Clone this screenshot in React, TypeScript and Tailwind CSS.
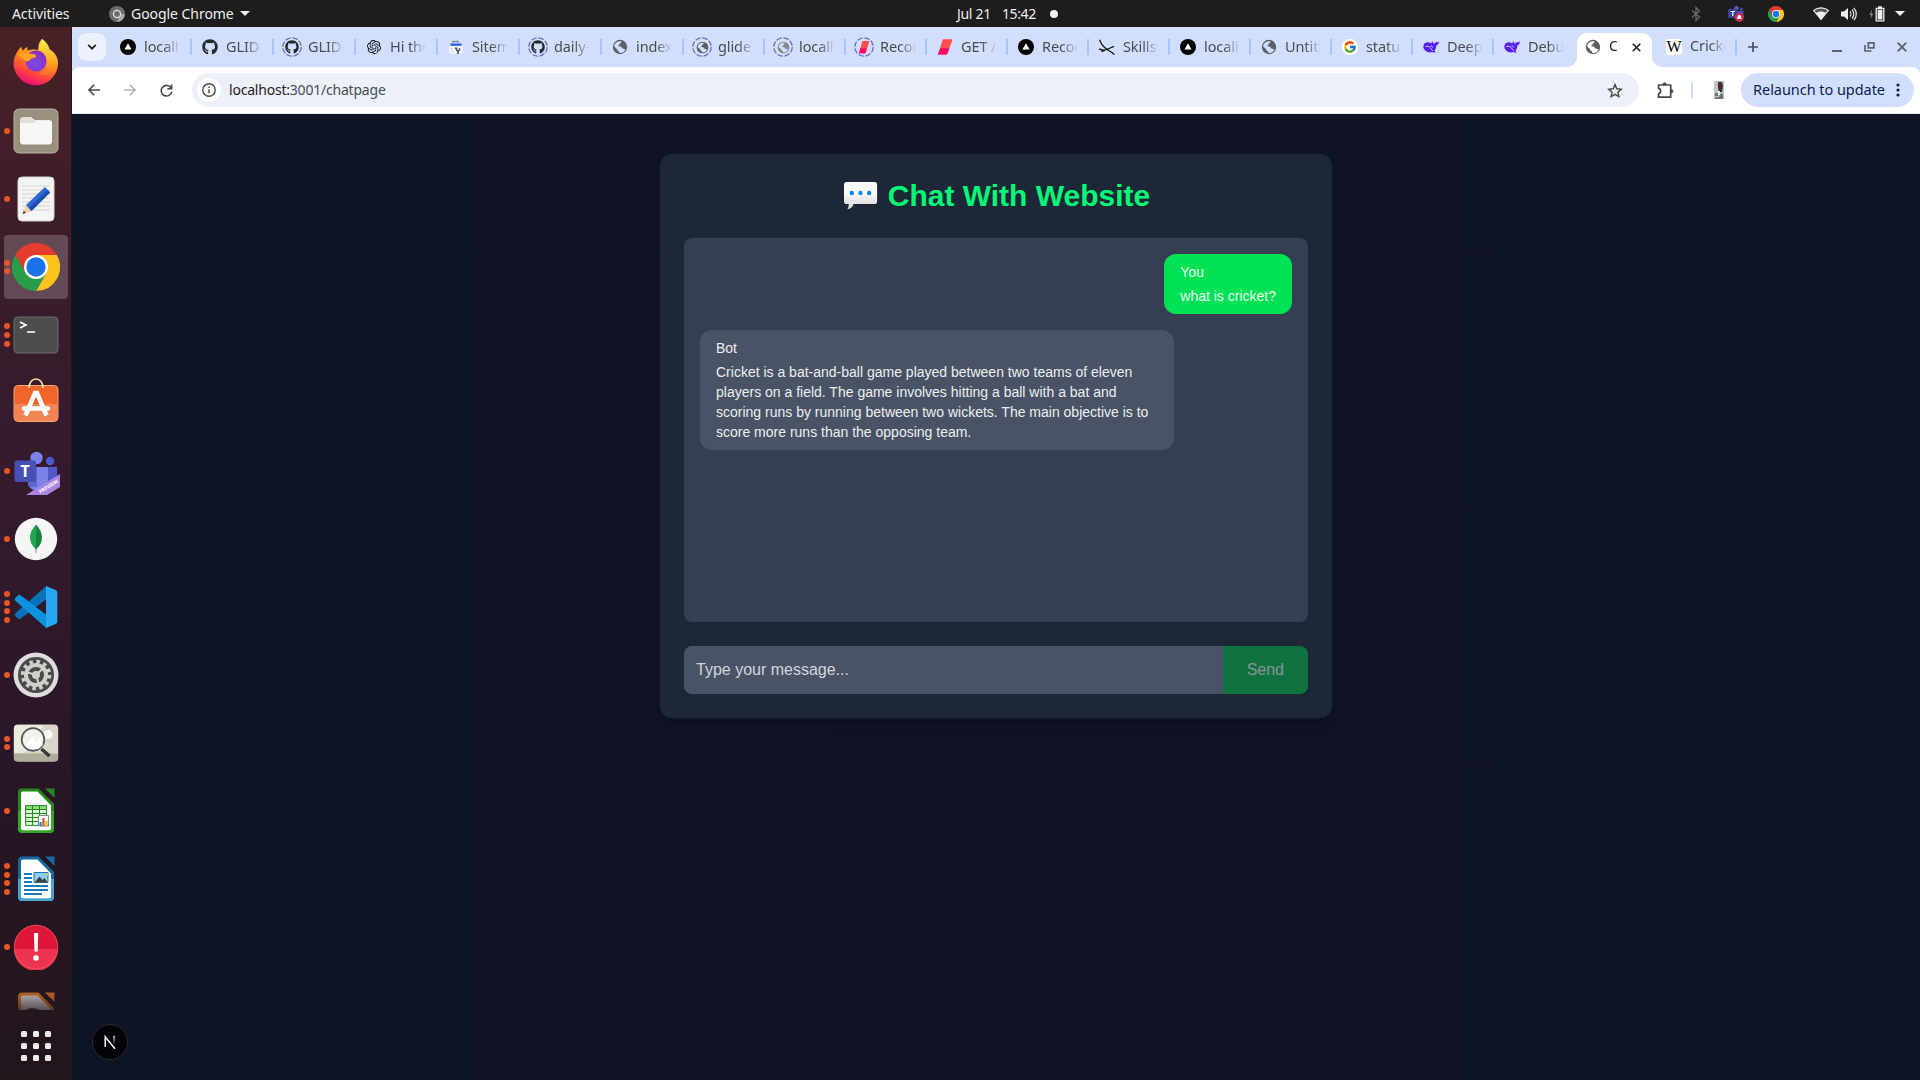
import React from "react";
import { FaGithub } from "react-icons/fa";
import { FcGoogle } from "react-icons/fc";
import { SiOpenai } from "react-icons/si";

/* ---------- favicons ---------- */

const Globe = ({ color = "#5b5f66", size = 16, land = "#d2dffc" }: { color?: string; size?: number; land?: string }) => (
  <svg width={size} height={size} viewBox="0 0 16 16">
    <circle cx="8" cy="8" r="7.2" fill={color} />
    <path
      d="M9.300 2.300c.3 1.200-.2 1.700-1 1.900-.9.200-.9.700-.8 1.400.1.700-.6 1-1.500 1 .1.900.8 1 1.900 1 1.300 0 1.800.6 1.900 1.600.9.100 1.500.1 1.900.7.500.7 1.300.4 2 .1A6 6 0 0 1 7.300 13.900c0-1.200-.2-1.700-1-1.900-.9-.2-1.200-.8-1.200-1.700L2 7.300A6 6 0 0 1 9.300 2.300z"
      fill={land}
    />
  </svg>
);

const Vercel = () => (
  <svg width="16" height="16" viewBox="0 0 16 16">
    <circle cx="8" cy="8" r="8" fill="#000" />
    <path d="M8 4.300l3.600 6.300H4.400z" fill="#fff" />
  </svg>
);

const Whale = () => (
  <svg width="16" height="16" viewBox="0 0 16 16">
    <path
      d="M.3 7.600C.3 4.700 2.600 3.200 5 3.200c1.400 0 2.500.8 3.400 1.600-.2-1 .2-1.900.9-2.600.6 1.700 1.400 2 2.200 2.600.3-1.100 1-1.500 1.900-1.500.9 0 1.500-.3 2.500-.9 0 1.800-.8 3.300-2.500 3.800-.1 2.600-.9 4.300-2 5.500l1.300 1.500c-1.200.6-2.500.4-3.400-.1-1.500.7-3.700.6-5.400-.3C1.800 11.800.3 9.900.3 7.600z"
      fill="#5a1cf5"
    />
    <path d="M2.400 7.600c1.900-1.200 4 .1 5.300 1.600 1 1.100 1.300 2.200 2.200 2.700M7.600 7c1-.2 1.800.4 2 1.500" stroke="#d2dffc" strokeWidth="1" fill="none" />
  </svg>
);

const Slab = ({ small }: { small?: boolean }) => (
  <svg width="16" height="16" viewBox="0 0 16 16">
    <g transform={small ? "translate(2.200 1.800) scale(.72 .8)" : undefined}>
      <path d="M6.700.2h7.500c.9 0 1.300.5 1 1.300l-3.200 8.700H2.800L5.400 1.200C5.600.500 6 .2 6.700.2z" fill="#ff4d4d" />
      <path d="M3.100 9.200h9.300l-1.800 5.400c-.3.800-.7 1.200-1.500 1.200H2c-.9 0-1.300-.5-1-1.300z" fill="#ff0a63" />
    </g>
  </svg>
);

const Plane = () => (
  <svg width="16" height="16" viewBox="0 0 16 16" fill="none" stroke="#111" strokeWidth="1.300">
    <path d="M.6.800c1.500 4.500 4.800 8.200 8 10 2.300 1.400 4.600 2.900 6.800 4.700" />
    <path d="M.3 9.900c2 1.300 4.600 1.600 7.200.6 2.800-1 5.200-2.200 7.600-3.100M2.600 12.600l3.400-1.400" />
  </svg>
);

const Sitemap = () => (
  <svg width="16" height="16" viewBox="0 0 16 16">
    <path d="M5 4V2.400h5V4" stroke="#7b8190" strokeWidth="1.200" fill="none" />
    <rect x="1" y="7" width="13.500" height="7.500" rx="1" fill="#f3f5fb" />
    <rect x="2.500" y="4.500" width="11" height="2.300" fill="#2f5fe8" />
    <path d="M7 9.200h1.500V11l1.500 1.500L11.500 11V9.200M10 12v3" stroke="#444a55" strokeWidth="1.500" fill="none" />
    <path d="M2 9.500h3M2 12h3" stroke="#d5d9e4" />
  </svg>
);

const Ring = ({ children }: { children: React.ReactNode }) => (
  <span className="relative flex h-4 w-4 items-center justify-center">
    <svg className="absolute -left-0.5 -top-0.5" width="20" height="20" viewBox="0 0 20 20">
      <circle cx="10" cy="10" r="9.200" fill="none" stroke="#6a6fb8" strokeWidth="1.300" strokeDasharray="5.600 1.625" />
    </svg>
    {children}
  </span>
);

const tabs: { label: string; icon: React.ReactNode }[] = [
  { label: "localhost", icon: <Vercel /> },
  { label: "GLID-1", icon: <FaGithub size={16} color="#24292f" /> },
  { label: "GLID-1", icon: <Ring><FaGithub size={14} color="#24292f" /></Ring> },
  { label: "Hi there", icon: <SiOpenai size={14} color="#15171b" /> },
  { label: "Sitemap", icon: <Sitemap /> },
  { label: "daily-n", icon: <Ring><FaGithub size={14} color="#24292f" /></Ring> },
  { label: "index.h", icon: <Globe /> },
  { label: "glide.c", icon: <Ring><Globe size={13} /></Ring> },
  { label: "localhost", icon: <Ring><Globe size={13} color="#85868b" /></Ring> },
  { label: "Recon", icon: <Ring><Slab small /></Ring> },
  { label: "GET /a", icon: <Slab /> },
  { label: "Recon", icon: <Vercel /> },
  { label: "Skillsy", icon: <Plane /> },
  { label: "localhost", icon: <Vercel /> },
  { label: "Untitled", icon: <Globe /> },
  {
    label: "status",
    icon: (
      <span className="flex h-4 w-4 items-center justify-center rounded-full bg-white">
        <FcGoogle size={14} />
      </span>
    ),
  },
  { label: "DeepS", icon: <Whale /> },
  { label: "Debug", icon: <Whale /> },
];

const fade = "[mask-image:linear-gradient(to_right,black_55%,transparent_100%)]";

function TabStrip() {
  return (
    <div className="flex h-10 shrink-0 items-center bg-[#d2dffc] pl-1.5">
      <button className="flex h-7 w-7 items-center justify-center rounded-[9px] bg-[#ecf1fd]">
        <svg width="10" height="6" viewBox="0 0 10 6" fill="none" stroke="#1f2023" strokeWidth="1.900">
          <path d="M1.200.9L5 4.600 8.800.9" />
        </svg>
      </button>
      <div className="ml-1 flex">
        {tabs.map((t, i) => (
          <div key={i} className={`flex h-6 shrink-0 items-center ${i < 7 ? "w-[82px]" : "w-[81px]"}`}>
            <span className="ml-2.5 flex h-4 w-4 shrink-0 items-center justify-center">{t.icon}</span>
            <span className={`-mt-0.5 ml-2 w-9 overflow-hidden whitespace-nowrap text-[14.500px] leading-6 tracking-[-0.100px] text-[#484c55] ${fade}`}>{t.label}</span>
            {i < tabs.length - 1 && <span className="ml-auto h-4 w-0.5 bg-[#a9c3fb]" />}
          </div>
        ))}
      </div>
      <div className="relative ml-0.5 mt-1.5 flex h-[34px] w-[75px] shrink-0 items-center rounded-t-[10px] bg-white">
        <svg className="absolute -left-2.5 bottom-0" width="10" height="10">
          <path d="M10 0v10H0A10 10 0 0 0 10 0z" fill="#fff" />
        </svg>
        <svg className="absolute -right-2.5 bottom-0" width="10" height="10">
          <path d="M0 0v10h10A10 10 0 0 1 0 0z" fill="#fff" />
        </svg>
        <span className="-mt-1.5 ml-2 flex items-center">
          <Globe land="#ffffff" />
          <span className="-mt-0.5 ml-2 w-[11px] overflow-hidden text-[14.500px] text-[#1f2023] [mask-image:linear-gradient(to_right,black_60%,transparent)]">Ch</span>
          <svg className="ml-3" width="9" height="9" viewBox="0 0 9 9" stroke="#1f2023" strokeWidth="1.600">
            <path d="M.7.700l7.600 7.600M8.300.700L.700 8.300" />
          </svg>
        </span>
      </div>
      <span className="ml-3.5 flex h-4 w-4 items-center justify-center rounded-[3px] bg-white font-['Liberation_Serif',serif] text-[16px] leading-4 text-black">W</span>
      <span className={`-mt-0.5 ml-2 w-9 overflow-hidden whitespace-nowrap text-[14.500px] tracking-[-0.100px] text-[#484c55] ${fade}`}>Cricket</span>
      <span className="ml-[9px] h-4 w-0.5 bg-[#a9c3fb]" />
      <svg className="ml-[11px]" width="10" height="10" stroke="#4b4f57" strokeWidth="1.700">
        <path d="M5 0v10M0 5h10" />
      </svg>
      <div className="ml-auto flex items-center gap-[22px] pr-[13px]">
        <svg width="10" height="10" stroke="#5d6270" strokeWidth="2">
          <path d="M0 9h10" />
        </svg>
        <svg width="11" height="10" viewBox="0 0 11 10" fill="none" stroke="#5d6270" strokeWidth="1.700">
          <path d="M4.300.9h5.600v5H4.300zM1 3v6h6.500" />
        </svg>
        <svg width="10" height="10" stroke="#5d6270" strokeWidth="1.900">
          <path d="M.7.700l8.600 8.600M9.300.700L.700 9.300" />
        </svg>
      </div>
    </div>
  );
}

function Toolbar() {
  return (
    <div className="h-[47px] shrink-0 bg-[#d2dffc]">
      <div className="flex h-[47px] items-center rounded-t-lg border-b border-[#dfe3ec] bg-white pl-4">
        <svg width="12" height="12" viewBox="0 0 12 12" fill="none" stroke="#474747" strokeWidth="1.600">
          <path d="M12 6H1.200M6.200.8L1 6l5.200 5.200" />
        </svg>
        <svg className="ml-6" width="12" height="12" viewBox="0 0 12 12" fill="none" stroke="#b4b4b6" strokeWidth="1.600">
          <path d="M0 6h10.800M5.800.8L11 6l-5.200 5.200" />
        </svg>
        <svg className="ml-6" width="13" height="13" viewBox="0 0 13 13" fill="none" stroke="#474747" strokeWidth="1.600">
          <path d="M11 3.800A5.300 5.300 0 1 0 11.800 7.600M11.600.6v4.200H7.400" />
        </svg>
        <div className="ml-[19px] flex h-[34px] w-[1447px] items-center rounded-full bg-[#ecf0f9] pl-[5px]">
          <span className="flex h-6 w-6 items-center justify-center rounded-full bg-white">
            <svg width="14" height="14" viewBox="0 0 14 14" fill="none" stroke="#474747" strokeWidth="1.400">
              <circle cx="7" cy="7" r="6.200" />
              <path d="M7 6.200v4M7 3.600v1.500" />
            </svg>
          </span>
          <span className="-mt-px ml-2 text-[14px] tracking-[-0.210px] text-[#1f2023]">
            localhost:<span className="text-[#4a4d54]">3001/chatpage</span>
          </span>
          <svg className="ml-auto mr-4" width="16" height="15" viewBox="0 0 16 15" fill="none" stroke="#474747" strokeWidth="1.400">
            <path d="M8 1.600l1.800 4.200 4.500.4-3.400 3 1 4.400L8 11.300l-3.900 2.300 1-4.400-3.400-3 4.500-.4z" />
          </svg>
        </div>
        <svg className="ml-[18px]" width="17" height="17" viewBox="0 0 17 17" fill="none" stroke="#474747" strokeWidth="1.700">
          <path d="M1.500 3h12.200v12.200H1.500v-3.400c2.800-.4 2.800-5 0-5.400z" strokeLinejoin="round" />
          <path d="M5.800 2.500a1.700 1.700 0 0 1 3.400 0zM14.200 7.500a1.600 1.600 0 0 1 0 3.400z" fill="#474747" strokeWidth="1" />
        </svg>
        <span className="ml-[17px] h-4 w-0.5 bg-[#cfdcfb]" />
        <svg className="ml-[21px]" width="10" height="18" viewBox="0 0 10 18">
          <path d="M0 0h10v18H0z" fill="#b9c4c6" />
          <path d="M4 1h4l1 4-1 6H5L4 7z" fill="#4b2a33" />
          <path d="M1 12h3v3H1zM6 13h3v3H5zM1 16h8v2H1z" fill="#6f7577" />
          <path d="M4 10h2v4H4z" fill="#eef3f3" />
        </svg>
        <button className="ml-[17px] flex h-[34px] w-[173px] items-center rounded-full bg-[#d2dffc] pl-3 text-[14.500px] text-[#0b1d55]">
          <span className="-mt-px w-[132px] whitespace-nowrap tracking-[-0.050px]">Relaunch to update</span>
          <svg className="ml-[11px]" width="4" height="14" fill="#0b1d55">
            <circle cx="2" cy="2" r="1.600" />
            <circle cx="2" cy="7" r="1.600" />
            <circle cx="2" cy="12" r="1.600" />
          </svg>
        </button>
      </div>
    </div>
  );
}

/* ---------- dock icons ---------- */

const ChromeIcon = ({ size }: { size: number }) => (
  <svg width={size} height={size} viewBox="0 0 48 48">
    <path d="M3.200 12A24 24 0 0 1 44.800 12H24L13.600 30z" fill="#e33b2e" />
    <path d="M44.800 12A24 24 0 0 1 24 48L34.400 30 24 12z" fill="#fcc31e" />
    <path d="M24 48A24 24 0 0 1 3.200 12L13.600 30 34.400 30z" fill="#2a9d49" />
    <circle cx="24" cy="24" r="12" fill="#fff" />
    <circle cx="24" cy="24" r="9.700" fill="#1a73e8" />
  </svg>
);

const Firefox = () => (
  <svg width="48" height="48" viewBox="0 0 48 48">
    <defs>
      <linearGradient id="ffBody" x1="0.700" y1="0" x2="0.300" y2="1">
        <stop offset="0" stopColor="#ffdf3a" />
        <stop offset="0.450" stopColor="#ff8a1e" />
        <stop offset="0.750" stopColor="#ff4040" />
        <stop offset="1" stopColor="#e6067f" />
      </linearGradient>
      <linearGradient id="ffFlame" x1="0.500" y1="0" x2="0.500" y2="1">
        <stop offset="0" stopColor="#fff44f" />
        <stop offset="0.700" stopColor="#ffa01f" />
        <stop offset="1" stopColor="#ff6a2a" />
      </linearGradient>
      <radialGradient id="ffOrb" cx="0.450" cy="0.650" r="0.600">
        <stop offset="0" stopColor="#7a4de8" />
        <stop offset="1" stopColor="#8b2bc0" />
      </radialGradient>
    </defs>
    <path d="M4 16c1.500-3.500 4-6 5.500-7.500 0 2 .5 3 1.500 4 1-1.300 3-3 4.500-3.400-.5 1.500 0 3 .5 3.500 4-1.500 8-1 10-.5L30 1c3 2.500 6.500 7 7 11 3.500 1.500 9 6 9 15A22.300 22.300 0 0 1 1.600 27C1.400 22.500 2.500 18.500 4 16z" fill="url(#ffBody)" />
    <path d="M30 1c-3 3-4.500 7-3 11 5 1 8 6 8 12 0 7-5 12-11 12 11 4 22-2 22-11 0-8-5-11.500-8.500-14C37 7 33 3 30 1z" fill="url(#ffFlame)" opacity="0.850" />
    <circle cx="24" cy="23" r="10.500" fill="url(#ffOrb)" />
    <path d="M6 16c5-2 12-.5 16 0 1.500.5 2.500 2 2 3-2 1-6 1.500-7 4-1.500 1-4 0-6-2-2-1.500-4-3-5-5z" fill="#ffa21f" />
  </svg>
);

const Files = () => (
  <svg width="46" height="46" viewBox="0 0 46 46">
    <rect x="1" y="1" width="44" height="44" rx="5" fill="#9a907e" stroke="#b8b1a2" />
    <path d="M7 12c0-2 1-3 3-3h8l4 3h14c2 0 3 1 3 3v5H7z" fill="#e5e1da" />
    <path d="M7 15h14l2-2.500h13c2 0 3 1 3 3V33c0 2-1 3.500-3 3.500H10c-2 0-3-1.500-3-3.500z" fill="#f8f7f5" />
  </svg>
);

const Editor = () => (
  <svg width="48" height="48" viewBox="0 0 48 48">
    <rect x="6" y="2" width="36" height="44" rx="4" fill="#f4f4f3" stroke="#d4d4d4" />
    <path d="M10 11h28M10 15h28M10 19h28M10 23h28M10 27h28M10 31h28M10 35h28" stroke="#d3d3d3" />
    <path d="M10.500 39l3-8.500 6 5.500z" fill="#f1c9a2" />
    <path d="M10.500 39l1.200-3.200 2.200 2z" fill="#333" />
    <path d="M14 30l19-18 5 5.500L19.500 36z" fill="#2f66d8" />
    <path d="M17 33l18.800-18 2.200 2.500L19.500 36z" fill="#1e4cab" />
  </svg>
);

const Terminal = () => (
  <svg width="46" height="38" viewBox="0 0 46 38">
    <rect x="1" y="1" width="44" height="36" rx="4" fill="#4d4d4d" stroke="#6b6f6b" />
    <path d="M7 6l6 3-6 3" stroke="#fff" strokeWidth="1.600" fill="none" />
    <path d="M14 16h8" stroke="#fff" strokeWidth="1.600" />
  </svg>
);

const Software = () => (
  <svg width="46" height="44" viewBox="0 0 46 44">
    <rect x="1" y="7.500" width="44" height="36" rx="4" fill="#f06529" stroke="#f9a37a" />
    <path d="M1.500 26h43v13c0 2.500-1.500 4-4 4h-35c-2.500 0-4-1.500-4-4z" fill="#f28453" />
    <path d="M16 10c0-12 14-12 14 0" stroke="#f5dcae" strokeWidth="1.700" fill="none" />
    <path d="M12.500 37.500L22 15h2l9.500 22.500" stroke="#fff" strokeWidth="4.500" fill="none" />
    <path d="M11 30.500h24" stroke="#fff" strokeWidth="4.500" strokeLinecap="round" />
  </svg>
);

const Teams = () => (
  <svg width="48" height="46" viewBox="0 0 48 46" overflow="visible">
    <circle cx="24.500" cy="8" r="6.200" fill="#7b83eb" />
    <circle cx="38" cy="11" r="4.200" fill="#5059c9" />
    <path d="M35 17h10v12c0 5-3 8-8 8h-2z" fill="#5059c9" />
    <path d="M16 17h20v15c0 6-4 9-9.500 9S16 38 16 32z" fill="#7b83eb" />
    <path d="M25 17v20h-8a14 14 0 0 1-1-5V17z" fill="#6067cc" />
    <rect x="2.500" y="10.500" width="21.500" height="21.500" rx="2" fill="#4850b5" />
    <text x="13.200" y="26.500" textAnchor="middle" fontSize="16" fontWeight="700" fill="#fff" fontFamily="Noto Sans">T</text>
    <path d="M14 45L48 24v13L35 45z" fill="#ab86e0" />
    <text transform="translate(28.200 43.500) rotate(-31)" fontSize="5" fontWeight="700" fill="#fff" fontFamily="Noto Sans" textLength="21.500" lengthAdjust="spacingAndGlyphs">PREVIEW</text>
  </svg>
);

const Mongo = () => (
  <svg width="44" height="44" viewBox="0 0 44 44">
    <circle cx="22" cy="22" r="21.200" fill="#f5f5f5" />
    <path d="M22 36v-6" stroke="#9aa39a" strokeWidth="1.200" />
    <path d="M22 7.500c-8 8.500-8 18 0 25z" fill="#22a652" />
    <path d="M22 7.500c8 8.500 8 18 0 25z" fill="#16843f" />
  </svg>
);

const VSCode = () => (
  <svg width="44" height="44" viewBox="0 0 44 44">
    <path d="M32.500.8L1.300 28.300c-.8.800-.8 1.800 0 2.600l2.500 2.700c.8.700 1.800.8 2.700.1L32.500 14z" fill="#0a72b8" />
    <path d="M32.500 43.200L1.300 15.700c-.8-.8-.8-1.800 0-2.600l2.500-2.700c.8-.7 1.800-.8 2.700-.1L32.500 30z" fill="#0c93dd" />
    <path d="M32 1l9.500 4c1.200.6 1.800 1.500 1.800 2.800v28.400c0 1.300-.6 2.200-1.800 2.800l-9.500 4z" fill="#25a9f2" />
  </svg>
);

const Settings = () => (
  <svg width="46" height="46" viewBox="0 0 46 46">
    <circle cx="23" cy="23" r="22.500" fill="#dededd" />
    <circle cx="23" cy="23" r="18" fill="#4a4a49" />
    <circle cx="23" cy="23" r="13" fill="none" stroke="#cfcfcc" strokeWidth="4.500" strokeDasharray="3.400 3.407" />
    <circle cx="23" cy="23" r="10" fill="none" stroke="#cfcfcc" strokeWidth="4" />
    <circle cx="23" cy="23" r="4" fill="#cfcfcc" />
    <path d="M23 23l-10-3M23 23l7.500-7M23 23l3 10" stroke="#cfcfcc" strokeWidth="2.200" />
  </svg>
);

const Viewer = () => (
  <svg width="46" height="38" viewBox="0 0 46 38">
    <rect x="0.800" y="0.500" width="44.400" height="37" rx="4" fill="#d8d6ca" />
    <path d="M1 5c0-3 1.500-4 4-4h26L12 29H1z" fill="#eceadf" />
    <path d="M1 29.500h44V34c0 2.500-1.500 3.500-4 3.500H5c-2.500 0-4-1-4-3.500z" fill="#b0ad9c" />
    <circle cx="35" cy="10.500" r="4.700" fill="#f7f7f4" />
    <circle cx="20" cy="15.500" r="11.300" fill="#f2f1e9" stroke="#545454" strokeWidth="1.700" />
    <path d="M13 22l6-10 4 6 3-4 4 7-5 4h-8z" fill="#fff" />
    <path d="M28.500 25l8 7" stroke="#33363a" strokeWidth="3.400" />
  </svg>
);

const OfficeDoc = ({ top, bottom, paper = "#fdfdfd", children }: { top: string; bottom: string; paper?: string; children?: React.ReactNode }) => (
  <svg width="48" height="48" viewBox="0 0 48 48">
    <path d="M10 1.500h16.500L42 17v25c0 2.500-1.500 4-4 4H10c-2.500 0-4-1.500-4-4V5.500c0-2.500 1.500-4 4-4z" fill={top} />
    <path d="M6 24h36v18c0 2.500-1.500 4-4 4H10c-2.500 0-4-1.500-4-4z" fill={bottom} />
    <path d="M33 1.500h9.500v9.500z" fill={top} />
    <path d="M11 4.500h14.500L39 18.500v23c0 1-.8 1.700-1.800 1.700H11c-1.200 0-2-.8-2-2V6.500c0-1.200.8-2 2-2z" fill={paper} />
    {children}
  </svg>
);

const Calc = () => (
  <OfficeDoc top="#258a1c" bottom="#35a826">
    <path d="M13 18h22v20H13z" fill="#ddf6d6" />
    <path d="M13 18h22v4H13z" fill="#8edb7c" />
    <path d="M13.600 18.600h21v19.800h-21zM13 22.500h22M13 26.500h22M13 30.500h22M13 34.500h22M20.500 18v20M27.500 18v20" stroke="#248a1d" fill="none" />
    <path d="M26.500 28.500h10v10.500h-10z" fill="#fff" stroke="#888" />
    <path d="M28.600 35v4" stroke="#2483c5" strokeWidth="2.200" />
    <path d="M31.500 31v8" stroke="#e2541d" strokeWidth="2.200" />
    <path d="M34.500 34v5" stroke="#f0b01f" strokeWidth="2.200" />
  </OfficeDoc>
);

const Writer = () => (
  <OfficeDoc top="#12689f" bottom="#49a5d6">
    <path d="M12 19h8M12 23h8M12 27h8M12 31h24M12 35h24M12 39h18" stroke="#1c78b8" strokeWidth="1.900" />
    <path d="M22 17.500h14v10H22z" fill="#8bd0f3" stroke="#1c78b8" />
    <path d="M22.500 27.500l5-6 3 3.500 2-2 3.500 4.500z" fill="#444" />
    <path d="M33 18h3v3z" fill="#f7c325" />
  </OfficeDoc>
);

const ErrorBadge = () => (
  <svg width="46" height="46" viewBox="0 0 46 46">
    <circle cx="23" cy="23" r="22" fill="#dc1738" />
    <path d="M1 25a22 22 0 0 0 44 0z" fill="#ec3350" />
    <circle cx="23" cy="23" r="21.800" fill="none" stroke="#f0566c" strokeWidth="0.800" />
    <path d="M21 9h4.200l-.5 18.500h-3.200z" fill="#fff" />
    <circle cx="23" cy="34" r="2.800" fill="#fff" />
  </svg>
);

const dock: { dots: number; icon: React.ReactNode; active?: boolean; nudge?: string }[] = [
  { dots: 0, icon: <Firefox />, nudge: "pb-0.5" },
  { dots: 1, icon: <Files /> },
  { dots: 1, icon: <Editor /> },
  { dots: 2, icon: <ChromeIcon size={48} />, active: true },
  { dots: 3, icon: <Terminal /> },
  { dots: 0, icon: <Software />, nudge: "pb-1.5" },
  { dots: 1, icon: <Teams />, nudge: "pt-1" },
  { dots: 1, icon: <Mongo /> },
  { dots: 4, icon: <VSCode /> },
  { dots: 1, icon: <Settings /> },
  { dots: 2, icon: <Viewer /> },
  { dots: 1, icon: <Calc /> },
  { dots: 4, icon: <Writer /> },
  { dots: 1, icon: <ErrorBadge /> },
];

function Dock() {
  return (
    <div className="flex w-[72px] shrink-0 flex-col border-r border-[#20151d] bg-[linear-gradient(to_bottom,#472125_0%,#3a1c2c_26%,#311a2c_50%,#261524_76%,#22161d_100%)] pl-1 pt-1">
      <div className="flex h-[979px] flex-col gap-1 overflow-hidden">
        {dock.map((d, i) => (
          <div key={i} className={`relative flex h-16 w-16 shrink-0 items-center justify-center rounded ${d.active ? "bg-white/20" : ""} ${d.nudge ?? ""}`}>
            <span className="absolute inset-y-0 left-0 flex flex-col items-center justify-center gap-[2.700px]">
              {Array.from({ length: d.dots }, (_, k) => (
                <span key={k} className="h-1.5 w-1.5 rounded-full bg-[#e95420]" />
              ))}
            </span>
            {d.icon}
          </div>
        ))}
        <div className="flex h-16 w-16 shrink-0 items-center justify-center [mask-image:linear-gradient(to_bottom,rgb(0_0_0/0.950)_12px,rgb(0_0_0/0.300)_29px)]">
          <OfficeDoc top="#b4611f" bottom="#b4611f" paper="#b0acb0">
            <path d="M14 20c4-3 10-2 14 0" stroke="#333" strokeWidth="2" fill="none" />
          </OfficeDoc>
        </div>
      </div>
      <div className="ml-[17px] mt-[21px] grid w-[30px] grid-cols-3 gap-1.5">
        {Array.from({ length: 9 }, (_, k) => (
          <span key={k} className="h-1.5 w-1.5 rounded-[1.500px] bg-[#f2f0ef]" />
        ))}
      </div>
    </div>
  );
}

/* ---------- desktop top bar ---------- */

function SystemBar() {
  return (
    <div className="flex h-[27px] shrink-0 items-center bg-[#1d1d1d] text-[14px] text-[#eeeeec]">
      <div className="flex w-[957px] items-center pl-3">
        <span className="w-[97px] tracking-[-0.100px]">Activities</span>
        <svg width="16" height="16" viewBox="0 0 16 16">
          <circle cx="8" cy="8" r="8" fill="#6d6d6d" />
          <path d="M8 8h7.800A8 8 0 0 1 8 16l3-6z" fill="#a9a9a9" />
          <circle cx="8" cy="8" r="4.200" fill="#e2e2e2" />
          <circle cx="8" cy="8" r="2.900" fill="#6d6d6d" />
        </svg>
        <span className="ml-1.5 whitespace-nowrap tracking-[-0.050px]">Google Chrome</span>
        <svg className="ml-1.5" width="10" height="5">
          <path d="M0 0h10L5 5z" fill="#eeeeec" />
        </svg>
      </div>
      <span className="-mt-px w-[45px] tracking-[-0.300px]">Jul 21</span>
      <span className="-mt-px w-12 tracking-[-0.400px]">15:42</span>
      <span className="h-2 w-2 rounded-full bg-[#f2f2f2]" />
      <div className="ml-auto flex items-center pr-[15px]">
        <svg width="10" height="16" viewBox="0 0 10 16" fill="none" stroke="#6a6a6a" strokeWidth="1.300">
          <path d="M1 4.500l7.500 6.500L5 14.500v-13L8.500 5 1 11.500" />
        </svg>
        <svg className="ml-[27px]" width="16" height="16" viewBox="0 0 16 16">
          <circle cx="8.500" cy="2.300" r="2.200" fill="#5560c8" />
          <circle cx="13.500" cy="3" r="1.500" fill="#4550b0" />
          <path d="M6 5h9.500v6c0 3-9 3-9.500 0z" fill="#4550b0" />
          <rect y="3" width="9.500" height="9" rx="1" fill="#39419b" />
          <path d="M2.500 5.500h4.500M4.750 5.500V10" stroke="#fff" strokeWidth="1.200" />
          <circle cx="11.300" cy="11.300" r="4.600" fill="#cc2d4a" />
          <path d="M8.800 13c.9-1 .6-4.200 2.500-4.200s1.600 3.200 2.500 4.200z" fill="#fff" />
        </svg>
        <span className="ml-6">
          <ChromeIcon size={16} />
        </span>
        <svg className="ml-[29px]" width="16" height="13" viewBox="0 0 16 13">
          <path d="M.8 3.600C4.800-.2 11.200-.2 15.200 3.600L8 12z" fill="#555" />
          <path d="M3 6c2.800-2 7.200-2 10 0l-5 6.500z" fill="#eeeeec" />
          <path d="M.6 3.400C4.800 0 11.200 0 15.400 3.400L8 12.500z" fill="none" stroke="#eeeeec" strokeWidth="1.200" />
        </svg>
        <svg className="ml-3" width="16" height="14" viewBox="0 0 16 14">
          <path d="M0 4.500h3L7 1v12L3 9.500H0z" fill="#eeeeec" />
          <path d="M9 4.500c1.300 1.300 1.300 3.700 0 5M11 2.500c2.400 2.400 2.400 6.600 0 9M12.800.800c3.300 3.500 3.300 8.900 0 12.400" fill="none" stroke="#eeeeec" strokeWidth="1.200" />
        </svg>
        <svg className="ml-3" width="16" height="16" viewBox="0 0 16 16">
          <path d="M3 3.500L.3 9h1.900l-.8 4L4.200 7.500H2.300z" fill="#8a8a8a" />
          <path d="M7.200 2.300h7.600v12.500H7.200zM9 1h4" fill="none" stroke="#eeeeec" strokeWidth="1.300" />
          <path d="M8.600 3.600h4.800v9.900H8.600z" fill="#eeeeec" />
        </svg>
        <svg className="ml-2.5" width="10" height="5">
          <path d="M0 0h10L5 5z" fill="#eeeeec" />
        </svg>
      </div>
    </div>
  );
}

/* ---------- page ---------- */

function ChatPage() {
  return (
    <div className="relative flex-1 bg-[linear-gradient(to_right,#0e1425,#101326_45%,#0e1325)] pt-10 font-['Liberation_Sans',Arial,sans-serif]">
      <div className="mx-auto w-[672px] rounded-xl bg-[#1d2738] p-6 shadow-lg">
        <h1 className="mb-6 flex items-center justify-center text-3xl font-bold text-[#05f876]">
          <svg className="mr-[9px]" width="37" height="36" viewBox="0 0 37 36">
            <defs>
              <linearGradient id="bubble" x1="0" y1="0" x2="0" y2="1">
                <stop offset="0.400" stopColor="#fafafa" />
                <stop offset="1" stopColor="#d4d4d4" />
              </linearGradient>
            </defs>
            <path d="M4.500 4h28c1.500 0 2.600 1 2.600 2.600v16.800c0 1.600-1.100 2.600-2.600 2.600H11.500c-.6 2.800-2.800 5-6.300 5.200 1.300-1.400 1.600-3.200 1.500-5.200H4.500C3 26 2 25 2 23.400V6.600C2 5 3 4 4.500 4z" fill="url(#bubble)" />
            <circle cx="9.800" cy="15" r="2.200" fill="#0a84f5" />
            <circle cx="18.500" cy="15" r="2.200" fill="#0a84f5" />
            <circle cx="27.200" cy="15" r="2.200" fill="#0a84f5" />
          </svg>
          Chat With Website
        </h1>
        <div className="mb-6 flex h-96 flex-col gap-4 rounded-lg bg-[#363e52] p-4 text-sm">
          <div className="self-end rounded-xl bg-[#00e255] px-4 py-2 text-white/95">
            <p className="mb-1">You</p>
            <p>what is cricket?</p>
          </div>
          <div className="max-w-[80%] self-start rounded-xl bg-[#495365] px-4 py-2 text-[#eceef0]">
            <p className="mb-1">Bot</p>
            <p>
              Cricket is a bat-and-ball game played between two teams of eleven players on a field. The game involves hitting a ball with a bat and scoring runs by running between two wickets. The main objective is to score more runs than the opposing team.
            </p>
          </div>
        </div>
        <form className="flex h-12">
          <input className="min-w-0 flex-1 rounded-l-lg bg-[#495365] p-3 text-base text-white outline-none placeholder:text-[#d1d5dc]" placeholder="Type your message..." />
          <button type="button" disabled className="rounded-r-lg bg-[#0e733e] px-6 text-base text-[#8b9398]">
            Send
          </button>
        </form>
      </div>
      <div className="absolute bottom-5 left-5 flex h-9 w-9 items-center justify-center rounded-full border border-[#26292f] bg-[#030407]">
        <svg width="14" height="14" viewBox="0 0 14 14" fill="none" stroke="#fff" strokeWidth="1.500">
          <defs>
            <linearGradient id="nFade" x1="0" y1="0" x2="0" y2="1">
              <stop offset="0" stopColor="#fff" />
              <stop offset="1" stopColor="#fff" stopOpacity="0.100" />
            </linearGradient>
          </defs>
          <path d="M2.200 12V1.800L12 13.800" />
          <path d="M10.700 1v8h.9V1z" stroke="url(#nFade)" strokeWidth="0.700" />
        </svg>
      </div>
    </div>
  );
}

export default function App() {
  return (
    <div className="flex h-[1080px] w-[1920px] flex-col overflow-hidden font-['Noto_Sans',sans-serif]">
      <SystemBar />
      <div className="flex min-h-0 flex-1">
        <Dock />
        <div className="flex min-w-0 flex-1 flex-col">
          <TabStrip />
          <Toolbar />
          <ChatPage />
        </div>
      </div>
    </div>
  );
}
